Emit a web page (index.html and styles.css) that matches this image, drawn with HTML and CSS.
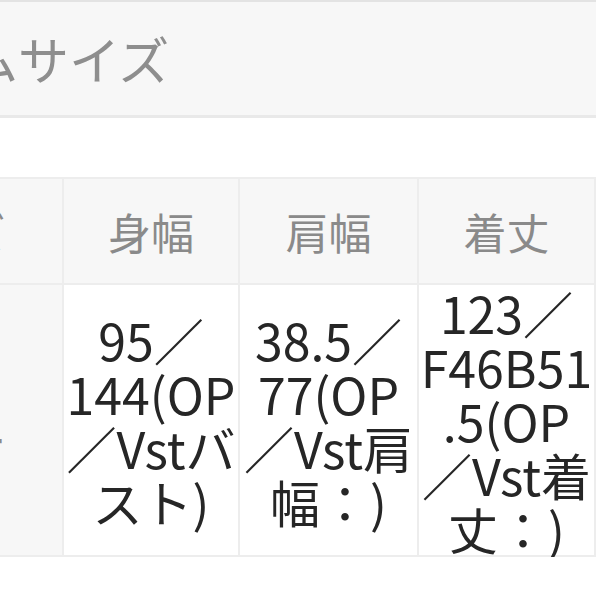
FILE: index.html
```html
<!DOCTYPE html>
<html lang="ja">
<head>
<meta charset="utf-8">
<title>アイテムサイズ</title>
<link rel="stylesheet" href="styles.css">
</head>
<body>
<div class="page">
  <div class="title-bar">
    <h2 class="title">アイテムサイズ</h2>
  </div>
  <table class="size-table">
    <colgroup>
      <col class="c-label">
      <col class="c-a">
      <col class="c-b">
      <col class="c-c">
    </colgroup>
    <thead>
      <tr>
        <th class="label">サイズ</th>
        <th>身幅</th>
        <th>肩幅</th>
        <th>着丈</th>
      </tr>
    </thead>
    <tbody>
      <tr>
        <th class="label body-label">フリー</th>
        <td>95／144(OP／Vstバスト)</td>
        <td>38.5／77(OP／Vst肩幅：)</td>
        <td>123／F46B51.5(OP／Vst着丈：)</td>
      </tr>
    </tbody>
  </table>
</div>
</body>
</html>
```
FILE: styles.css
```css
html, body {
  margin: 0;
  padding: 0;
  background: #ffffff;
}
body {
  overflow: hidden;
  font-family: "Noto Sans CJK JP", "Noto Sans", sans-serif;
}
.page {
  margin-left: -181px;
  width: 780px;
}
.title-bar {
  border-top: 2px solid #e3e3e3;
  border-bottom: 3px solid #e9e9e9;
  background: #f7f7f7;
  height: 113px;
  display: flex;
  align-items: center;
}
.title {
  margin: 0;
  font-size: 51px;
  font-weight: 400;
  line-height: 1;
  color: #8e8e8e;
}
.size-table {
  margin-top: 59px;
  border-collapse: collapse;
  table-layout: fixed;
  width: 775px;
}
.c-label { width: 243px; }
.c-a { width: 176px; }
.c-b { width: 179px; }
.c-c { width: 177px; }
.size-table th,
.size-table td {
  border: 2px solid #ededed;
  padding: 0;
  text-align: center;
  vertical-align: middle;
}
.size-table th {
  background: #f7f7f7;
  color: #8a8a8a;
  font-size: 43px;
  font-weight: 400;
  line-height: 1;
}
.size-table thead th {
  height: 104px;
}
.size-table .body-label {
  padding-top: 38px;
}
.size-table td {
  background: #ffffff;
  color: #262626;
  font-size: 50px;
  line-height: 54px;
  padding: 0;
  overflow-wrap: anywhere;
}
```
